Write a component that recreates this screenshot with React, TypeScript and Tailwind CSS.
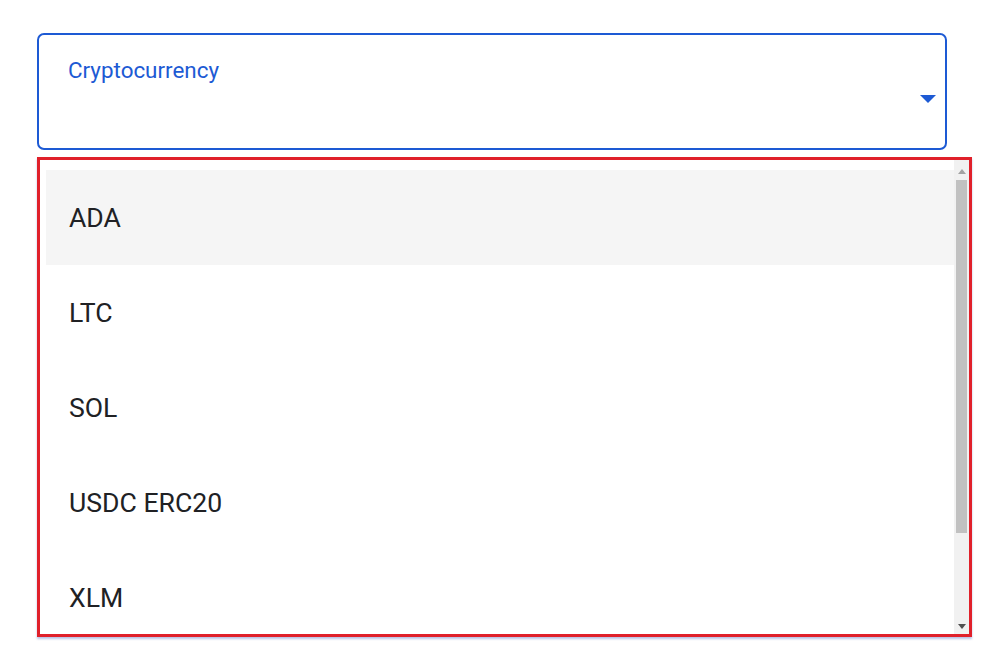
const options = ["ADA", "LTC", "SOL", "USDC ERC20", "XLM"];

export default function App() {
  return (
    <div className="w-[991px] h-[670px] bg-white font-['Roboto',sans-serif] pt-[33px] pl-[37px]">
      <div className="w-[910px] h-[117px] border-2 border-[#1d5ad4] rounded-[7px] flex justify-between pl-[29px] pr-[8px] pt-[22px]">
        <span className="text-[22.4px] leading-[26px] text-[#1d5ad4]">Cryptocurrency</span>
        <svg width="16" height="8" viewBox="0 0 16 8" className="mt-[38px] mr-[1px]">
          <path d="M0 0 L16 0 L8 8 Z" fill="#1d5ad4" />
        </svg>
      </div>

      <div className="mt-[7px] w-[935px] h-[480px] border-[3px] border-[#e0202a] shadow-[0_2px_2px_rgba(60,80,180,0.35)] flex bg-white">
        <div className="flex-1 pt-[10px] pl-[6px]">
          {options.map((o, i) => (
            <div
              key={o}
              className={`h-[95px] flex items-center pl-[23px] text-[26.6px] text-[#202124] ${i === 0 ? "bg-[#f5f5f5]" : ""}`}
            >
              {o}
            </div>
          ))}
        </div>
        <div className="w-[15px] bg-[#f1f1f1] flex flex-col items-center">
          <svg width="8" height="5" viewBox="0 0 8 5" className="mt-[9px]">
            <path d="M0 5 L8 5 L4 0 Z" fill="#a3a3a3" />
          </svg>
          <div className="mt-[6px] w-[11px] h-[353px] bg-[#c1c1c1]" />
          <div className="flex-1" />
          <svg width="8" height="5" viewBox="0 0 8 5" className="mb-[5px]">
            <path d="M0 0 L8 0 L4 5 Z" fill="#505050" />
          </svg>
        </div>
      </div>
    </div>
  );
}
